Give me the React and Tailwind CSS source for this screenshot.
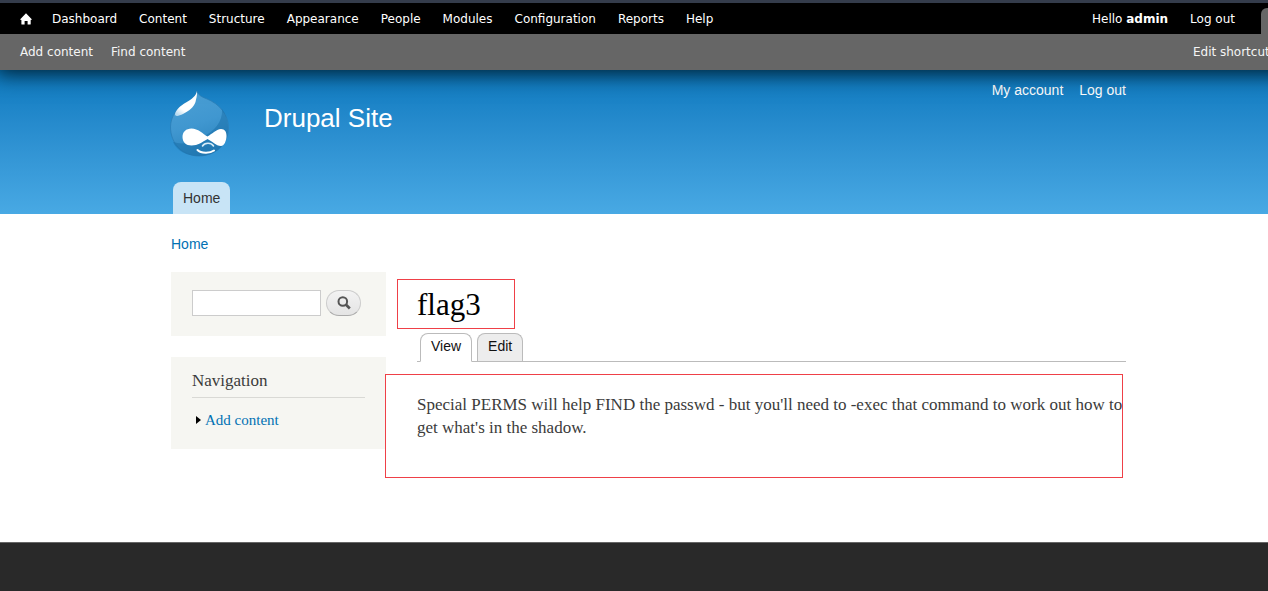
const menu = ['Dashboard', 'Content', 'Structure', 'Appearance', 'People', 'Modules', 'Configuration', 'Reports', 'Help'];

function HomeIcon() {
  return (
    <svg viewBox="0 0 12 12" className="h-3 w-3" fill="#fff" aria-hidden="true">
      <path d="M6 0.3 L12 6.4 L10.7 7 V11 Q10.7 11.6 10 11.6 H7.6 V8 H4.6 V11.6 H2 Q1.4 11.6 1.4 11 V7 L0 6.4 Z" />
    </svg>
  );
}

function Druplicon() {
  return (
    <svg viewBox="0 0 60 67" className="h-[67px] w-[60px]" role="img" aria-label="Home">
      <defs>
        <linearGradient id="drop" x1="0.3" y1="0" x2="0.6" y2="1">
          <stop offset="0" stopColor="#4b9fd4" />
          <stop offset="0.5" stopColor="#4097d0" />
          <stop offset="1" stopColor="#2a82bc" />
        </linearGradient>
        <linearGradient id="shine" x1="0.8" y1="0" x2="0.2" y2="1">
          <stop offset="0" stopColor="#fff" />
          <stop offset="0.75" stopColor="#fff" />
          <stop offset="1" stopColor="#b9dbf0" />
        </linearGradient>
      </defs>
      <path d="M27 1 C28 5 32 7 36 8.500 C50 14 58.500 25 58.500 38 C58.500 54 45 66 29 66 C13 66 0.500 54 0.500 37 C0.500 26 8 17 16 12.500 C22 9 26 6 27 1 Z" fill="url(#drop)" stroke="#2b7db6" strokeWidth="0.8" />
      <path d="M52 19 C58 27 60 41 56 49 C51 61 41 66 29 66 C17 66 7 61 3 52 C12 55 22 53 33 47 C44 41 53 32 52 19 Z" fill="#176da7" opacity="0.5" />
      <path d="M27 1 C26 6 22 9 16 12.500 C10 16 6 20 5 24 C5 27 9 26 13 24 C19 21 24 17 25.500 12 C26 9 27.500 5 27 1 Z" fill="url(#shine)" />
      <path d="M21.500 38.500 C28 38.500 33 44 37.500 46.500 C42 44 46 39.500 51 39 C55 39 56.500 42 56.500 46 C56.500 51 54 56 51 56 C46 56 42 51 37.500 49 C32 52 28 55.500 21.500 55.500 C16 55.500 12.500 52 12.500 47 C12.500 42 16 38.500 21.500 38.500 Z" fill="#fff" />
      <path d="M32.500 56 C34.500 52.500 41 52 43.500 56" fill="none" stroke="#d9edf8" strokeWidth="1.6" strokeLinecap="round" />
      <path d="M27.500 60 C31 63.500 40 63.500 44 60.500" fill="none" stroke="#fff" strokeWidth="2" strokeLinecap="round" />
    </svg>
  );
}

function Toolbar() {
  return (
    <div className="relative z-10 border-t-[3px] border-[#343c4b] font-['DejaVu_Sans',Verdana,sans-serif] text-xs leading-4 text-white shadow-[0_0_20px_4px_#000000c0]">
      <nav className="flex h-[31px] items-center bg-black pl-5">
        <a href="#home" aria-label="Home" className="mr-5"><HomeIcon /></a>
        <div className="flex gap-[22px]">
          {menu.map((m) => <a key={m} href="#menu">{m}</a>)}
        </div>
        <div className="ml-auto flex items-center gap-[22px] self-stretch">
          <a href="#user">Hello <strong>admin</strong></a>
          <a href="#logout">Log out</a>
          <button aria-label="Hide shortcuts" className="ml-1 h-[26px] w-9 self-end rounded-t-md bg-[#666]" />
        </div>
      </nav>
      <div className="flex h-9 items-center bg-[#666] pr-[21px] pl-5">
        <div className="flex gap-[18px] text-[#f5f5f5]">
          <a href="#add">Add content</a>
          <a href="#find">Find content</a>
        </div>
        <a href="#shortcuts" className="ml-auto text-[#f5f5f5]">Edit shortcuts</a>
      </div>
    </div>
  );
}

export default function App() {
  return (
    <div className="flex min-h-screen flex-col overflow-hidden bg-white font-['Liberation_Serif',Georgia,serif]">
      <div className="-mr-[29px]">
        <Toolbar />
        <header className="bg-linear-to-b from-[#0779bf] to-[#48a9e4] font-['Liberation_Sans',Arial,sans-serif]">
          <div className="mx-auto flex h-36 max-w-[955px] flex-col justify-between">
            <div className="flex items-start">
              <a href="#front" className="-ml-px pt-5"><Druplicon /></a>
              <h1 className="ml-[34px] pt-8 text-[26px] leading-8 text-white"><a href="#front">Drupal Site</a></h1>
              <nav className="ml-auto flex gap-4 pt-3 text-sm leading-4 text-white">
                <a href="#account">My account</a>
                <a href="#logout">Log out</a>
              </nav>
            </div>
            <nav className="flex pl-0.5">
              <a href="#front" className="rounded-t-lg bg-[#c8e4f6] px-[10px] py-2 text-sm leading-4 text-[#333]">Home</a>
            </nav>
          </div>
        </header>
        <div className="mx-auto max-w-[955px] pb-16">
          <nav className="pt-[22px] font-['Liberation_Sans',Arial,sans-serif] text-sm leading-4 text-[#0071b3]">
            <a href="#front">Home</a>
          </nav>
          <div className="mt-5 flex items-start">
            <aside className="flex w-[215px] shrink-0 flex-col gap-[21px]">
              <form className="flex h-16 items-start gap-[5px] bg-[#f6f6f2] px-[21px] pt-[18px]" onSubmit={(e) => e.preventDefault()}>
                <input type="search" aria-label="Search" className="h-[26px] w-[129px] border border-[#ccc] bg-white px-1 text-sm" />
                <button aria-label="Search" className="flex h-[26px] w-[35px] items-center justify-center rounded-full border border-[#ccc] border-b-[#aaa] bg-linear-to-b from-[#f3f3f3] to-[#e4e4e4]">
                  <svg viewBox="0 0 14 14" className="h-3.5 w-3.5" fill="none" stroke="#555" aria-hidden="true">
                    <circle cx="5.8" cy="5.5" r="4.3" strokeWidth="2" />
                    <path d="M8.8 8.5 L12.8 12.5" strokeWidth="2.6" />
                  </svg>
                </button>
              </form>
              <section className="bg-[#f6f6f2] px-[21px] pt-3 pb-[17px]">
                <h2 className="border-b border-[#d9d9d5] pb-1 text-[17px] leading-6 text-[#3b3b3b]">Navigation</h2>
                <ul className="pt-3 pb-0.5 text-[15px] leading-5">
                  <li className="flex items-center gap-1 pl-1">
                    <svg viewBox="0 0 5 8" className="h-2 w-[5px]" aria-hidden="true"><path d="M0 0 L5 4 L0 8 Z" /></svg>
                    <a href="#add" className="text-[#0071b3]">Add content</a>
                  </li>
                </ul>
              </section>
            </aside>
            <main className="-ml-px min-w-0 flex-1 pt-[7px]">
              <h1 className="ml-3 h-[50px] w-[118px] border border-[#ef4047] pl-[19px] text-[31px] leading-[49px] text-black">flag3</h1>
              <div className="ml-8 flex gap-[5px] border-b border-[#bbb] pt-1 pl-[3px] font-['Liberation_Sans',Arial,sans-serif] text-sm leading-4 text-[#111]">
                <a href="#view" className="-mb-px rounded-t-lg border border-[#bbb] border-b-white bg-white px-[10px] pt-1 pb-[7px]">View</a>
                <a href="#edit" className="rounded-t-lg border border-b-0 border-[#bbb] bg-[#ededed] px-[10px] pt-1 pb-[7px]">Edit</a>
              </div>
              <article className="mt-3 mr-[3px] h-[104px] border border-[#ef4047] pt-[18px] pl-[31px] text-[17px] leading-[23px] text-[#3b3b3b]">
                <p className="-mr-1">Special PERMS will help FIND the passwd - but you'll need to -exec that command to work out how to get what's in the shadow.</p>
              </article>
            </main>
          </div>
        </div>
      </div>
      <footer className="min-h-12 flex-1 border-t border-[#666] bg-[#292929]" />
    </div>
  );
}
